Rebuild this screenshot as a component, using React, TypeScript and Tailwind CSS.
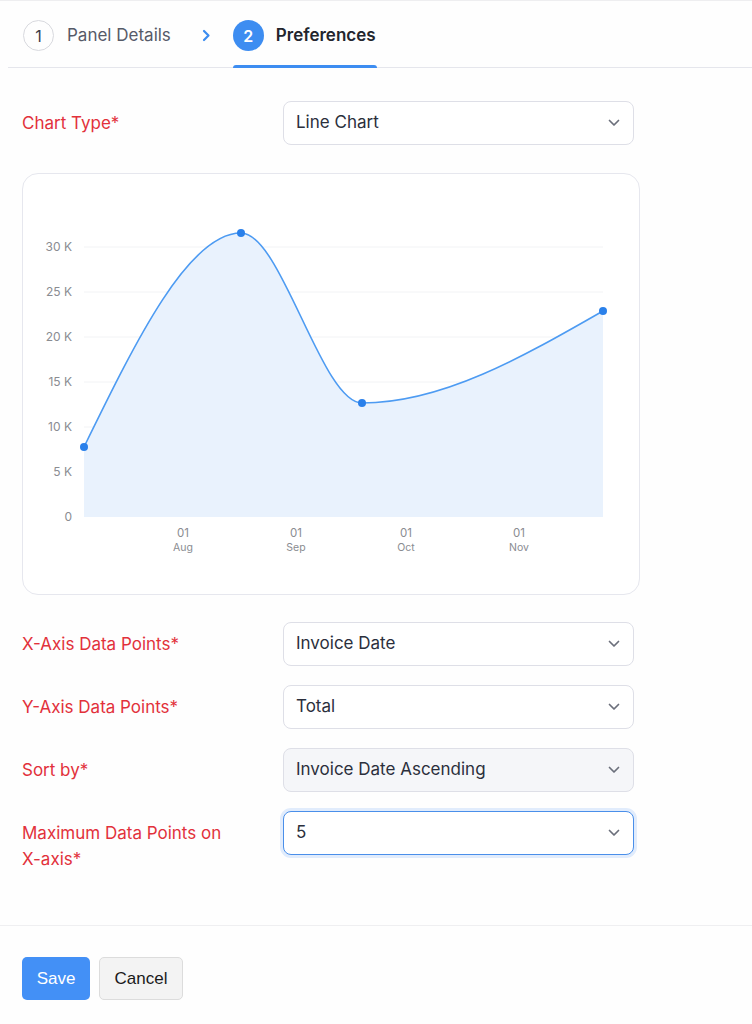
import React from 'react';

const labelCls =
  "w-[261px] shrink-0 pt-[9px] text-[17px] leading-[26px] text-[#e2313b]";

const Chevron = () => (
  <svg width="12" height="8" viewBox="0 0 12 8" fill="none" aria-hidden="true">
    <path d="M1.5 1.5l4.5 4.5 4.5-4.5" stroke="#6b6f7b" strokeWidth="1.7" strokeLinecap="round" strokeLinejoin="round" />
  </svg>
);

const SelectBox = ({ value, variant }: { value: string; variant?: 'muted' | 'focus' }) => {
  const base = "flex h-[44px] w-[351px] items-center justify-between rounded-[8px] pl-[12px] pr-[13px] text-[17px] text-[#2b2f3c]";
  const look =
    variant === 'focus'
      ? "border-[1.5px] border-[#4a8fea] bg-white shadow-[0_0_0_3px_#e1ecfc]"
      : variant === 'muted'
      ? "border border-[#dedfe7] bg-[#f5f6f9]"
      : "border border-[#dedfe7] bg-white";
  return (
    <div className={`${base} ${look}`}>
      <span>{value}</span>
      <Chevron />
    </div>
  );
};

const FieldRow = ({ label, children }: { label: React.ReactNode; children: React.ReactNode }) => (
  <div className="flex items-start">
    <div className={labelCls}>{label}</div>
    {children}
  </div>
);

const yTicks = [
  { v: '30 K', y: 247 },
  { v: '25 K', y: 292 },
  { v: '20 K', y: 337 },
  { v: '15 K', y: 382 },
  { v: '10 K', y: 427 },
  { v: '5 K', y: 472 },
  { v: '0', y: 517 },
];

const xTicks = [
  { m: 'Aug', x: 183 },
  { m: 'Sep', x: 296 },
  { m: 'Oct', x: 406 },
  { m: 'Nov', x: 519 },
];

const curve =
  "M84,447 C136.33,340 188.67,233 241,233 C281.33,233 321.67,403 362,403 C442.33,403 522.67,357 603,311";

const points = [
  [84, 447],
  [241, 233],
  [362, 403],
  [603, 311],
];

const Chart = () => (
  <div className="mt-[28px] h-[422px] w-[618px] overflow-hidden rounded-[16px] border border-[#e6e7ee] bg-white">
    <svg width="616" height="420" viewBox="23 174 616 420" className="block">
      {yTicks.slice(0, 6).map((t) => (
        <line key={t.v} x1="84" x2="603" y1={t.y} y2={t.y} stroke="#f2f3f5" strokeWidth="1" />
      ))}
      <path d={`${curve} L603,517 L84,517 Z`} fill="#e9f2fd" />
      <path d={curve} fill="none" stroke="#4d9bf2" strokeWidth="1.6" />
      {points.map(([x, y]) => (
        <circle key={x} cx={x} cy={y} r="4" fill="#2a80ea" />
      ))}
      {yTicks.map((t) => (
        <text
          key={t.v}
          x="72"
          y={t.y + 4}
          textAnchor="end"
          fontSize="12"
          fill="#8a8c91"
          fontFamily="Inter, 'Liberation Sans', sans-serif"
        >
          {t.v}
        </text>
      ))}
      {xTicks.map((t) => (
        <g key={t.m} fontFamily="Inter, 'Liberation Sans', sans-serif" fill="#8a8c91" textAnchor="middle">
          <text x={t.x} y="537" fontSize="11.5">01</text>
          <text x={t.x} y="551" fontSize="10.5">{t.m}</text>
        </g>
      ))}
    </svg>
  </div>
);

export default function App() {
  return (
    <div className="min-h-[1024px] w-[752px] border-t border-[#eeeef0] bg-[#fefefe] font-['Inter','Liberation_Sans',sans-serif]">
      {/* steps header */}
      <div className="ml-2 flex h-[67px] items-center border-b border-[#e5e6ec] pl-[15px] pt-[3px]">
        <div className="flex items-center">
          <div className="flex h-[31px] w-[31px] items-center justify-center rounded-full border border-[#d8d9de] text-[16px] text-[#3a3d48]">
            1
          </div>
          <span className="ml-[13px] text-[17px] text-[#565a68]">Panel Details</span>
        </div>
        <svg className="ml-[31px]" width="9" height="13" viewBox="0 0 9 13" fill="none" aria-hidden="true">
          <path d="M2 2l4.5 4.5L2 11" stroke="#3b8cf0" strokeWidth="2.2" strokeLinecap="round" strokeLinejoin="round" />
        </svg>
        <div className="relative ml-[22px] flex h-full items-center pr-[1px]">
          <div className="flex h-[31px] w-[31px] items-center justify-center rounded-full bg-[#3d8df1] text-[16px] font-semibold text-white">
            2
          </div>
          <span className="ml-[12px] text-[17px] font-semibold text-[#23252d]">Preferences</span>
          <div className="absolute bottom-[-1px] left-0 right-0 h-[3px] rounded-t-[3px] bg-[#3d8df1]" />
        </div>
      </div>

      {/* form */}
      <div className="px-[22px] pt-[33px]">
        <FieldRow label="Chart Type*">
          <SelectBox value="Line Chart" />
        </FieldRow>

        <Chart />

        <div className="mt-[27px] flex flex-col gap-[19px]">
          <FieldRow label="X-Axis Data Points*">
            <SelectBox value="Invoice Date" />
          </FieldRow>
          <FieldRow label="Y-Axis Data Points*">
            <SelectBox value="Total" />
          </FieldRow>
          <FieldRow label="Sort by*">
            <SelectBox value="Invoice Date Ascending" variant="muted" />
          </FieldRow>
          <FieldRow
            label={
              <>
                Maximum Data Points on
                <br />
                X-axis*
              </>
            }
          >
            <SelectBox value="5" variant="focus" />
          </FieldRow>
        </div>
      </div>

      <div className="mt-[53px] border-t border-[#efeff1]" />

      <div className="flex gap-[9px] px-[22px] pt-[31px] font-['Liberation_Sans',Arial,sans-serif]">
        <button className="h-[43px] w-[68px] rounded-[5px] bg-[#4390f6] text-[17px] text-white">Save</button>
        <button className="h-[43px] w-[84px] rounded-[5px] border border-[#dcdcdc] bg-[#f3f3f3] text-[17px] text-[#1a1a1a]">
          Cancel
        </button>
      </div>
    </div>
  );
}
